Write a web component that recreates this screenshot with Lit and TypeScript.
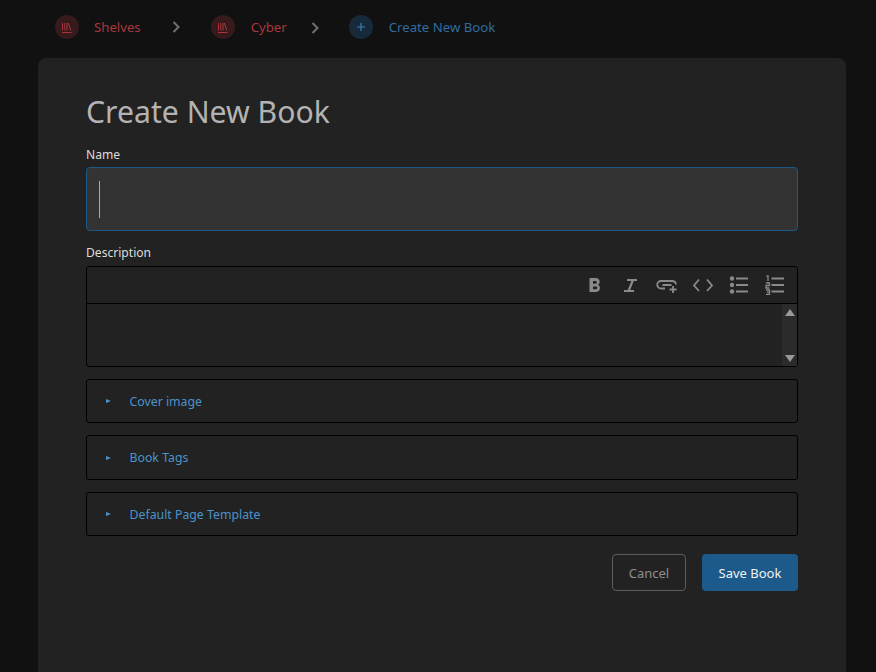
import { html, css, LitElement, svg } from "lit";
import { customElement } from "lit/decorators.js";

const shelfIcon = svg`<path d="M2.500 3v7.500M4.800 3v7.500M7 3v7.500M8.300 3l2.500 7.500M2 12.500h9.500" fill="none" stroke="currentColor" stroke-width="1"/>`;

const sections = ["Cover image", "Book Tags", "Default Page Template"];

@customElement("app-root")
export class AppRoot extends LitElement {
  static styles = css`
    :host {
      display: block;
      height: 672px;
      overflow: hidden;
      background: #111;
      font-family: "Noto Sans", "Open Sans", sans-serif;
      font-size: 13px;
      color: #ccc;
    }
    .crumbs {
      display: flex;
      align-items: center;
      height: 58px;
      padding: 0 0 4px 55px;
      box-sizing: border-box;
    }
    .crumb {
      display: flex;
      align-items: center;
      gap: 16px;
      font-size: 13.2px;
    }
    .crumb.start {
      gap: 15px;
    }
    .crumb.red {
      color: #a8373c;
    }
    .crumb.blue {
      color: #2f6d9f;
    }
    .dot {
      width: 24px;
      height: 24px;
      border-radius: 50%;
      display: flex;
      align-items: center;
      justify-content: center;
    }
    .red .dot {
      background: #361a1c;
    }
    .blue .dot {
      background: #172a3b;
    }
    .sep {
      flex: none;
      display: flex;
      justify-content: center;
      color: #707070;
    }
    .sep.first {
      width: 70px;
      margin-top: -1px;
    }
    .sep.second {
      width: 56px;
      padding-right: 6px;
      margin-top: 2px;
    }
    .card {
      margin: 0 30px 0 38px;
      background: #222;
      border-radius: 8px 8px 0 0;
      padding: 32px 48px 0;
      height: 614px;
      box-sizing: border-box;
    }
    h1 {
      margin: 0 0 12px;
      font-size: 30.2px;
      line-height: 44px;
      font-weight: 400;
      color: #b3b3b3;
    }
    label {
      display: block;
      font-size: 12.1px;
      line-height: 17px;
      color: #ddd;
      margin-bottom: 4px;
    }
    .desc-label {
      margin-bottom: 5px;
    }
    .name {
      height: 64px;
      box-sizing: border-box;
      background: #333;
      border: 1px solid #1c5a86;
      border-radius: 4px;
      padding: 13px 12px;
      margin-bottom: 13px;
    }
    .caret {
      width: 1px;
      height: 37px;
      background: #aaa;
    }
    .editor {
      height: 101px;
      box-sizing: border-box;
      border: 1px solid #000;
      border-radius: 3px;
      margin-bottom: 12px;
      display: flex;
      flex-direction: column;
    }
    .toolbar {
      height: 36px;
      flex: none;
      border-bottom: 1px solid #000;
      display: flex;
      align-items: center;
      justify-content: flex-end;
      gap: 14px;
      padding-right: 11px;
      color: #8a8a8a;
    }
    .toolbar svg {
      display: block;
      width: 22px;
      height: 20px;
    }
    .area {
      flex: 1;
      display: flex;
      justify-content: flex-end;
    }
    .scroll {
      width: 15px;
      background: #2b2b2b;
      display: flex;
      flex-direction: column;
      justify-content: space-between;
      align-items: center;
      padding: 5px 0 4px;
      box-sizing: border-box;
    }
    .up,
    .down {
      width: 0;
      height: 0;
      border-left: 5px solid transparent;
      border-right: 5px solid transparent;
    }
    .up {
      border-bottom: 7px solid #999;
    }
    .down {
      border-top: 7px solid #999;
    }
    .section {
      height: 44px;
      box-sizing: border-box;
      border: 1px solid #000;
      border-radius: 3px;
      margin-bottom: 12px;
      display: flex;
      align-items: center;
      padding-left: 19px;
      color: #4a93cb;
      font-size: 12.3px;
    }
    .section.tall {
      height: 45px;
    }
    .tri {
      width: 0;
      height: 0;
      border-left: 5px solid #4a93cb;
      border-top: 2.5px solid transparent;
      border-bottom: 2.5px solid transparent;
      margin-right: 18.5px;
    }
    .actions {
      display: flex;
      justify-content: flex-end;
      gap: 16px;
      margin-top: 18px;
    }
    .btn {
      height: 37px;
      box-sizing: border-box;
      border-radius: 4px;
      display: flex;
      align-items: center;
      justify-content: center;
      font-size: 13px;
    }
    .cancel {
      width: 74px;
      border: 1px solid #5c5c5c;
      color: #8f8f8f;
    }
    .save {
      width: 96px;
      background: #1b5a8a;
      color: #f2f2f2;
    }
  `;

  private toolbarIcons() {
    return html`
      <svg viewBox="0 0 22 20"><path d="M5.500 3h6.500a3.700 3.700 0 0 1 2.200 6.700 4 4 0 0 1-1.700 7.300H5.500zM9 6v2.700h2.500a1.350 1.350 0 0 0 0-2.700zM9 11.500v2.700h3a1.350 1.350 0 0 0 0-2.700z" fill="currentColor" fill-rule="evenodd"/></svg>
      <svg viewBox="0 0 22 20"><path d="M7 5h10M4 16h10M13 5 8.500 16" fill="none" stroke="currentColor" stroke-width="2.200"/></svg>
      <svg viewBox="0 0 22 20"><path d="M9 13.500H5a3.750 3.750 0 0 1 0-7.500h11a4 4 0 0 1 4 3.500M6.500 10h9M17 11v7M13.500 14.500h7" fill="none" stroke="currentColor" stroke-width="1.800"/></svg>
      <svg viewBox="0 0 22 20"><path d="M7 4.500 2 10.500 7 16M15 4.500l5 6-5 5.500" fill="none" stroke="currentColor" stroke-width="1.800"/></svg>
      <svg viewBox="0 0 22 20" fill="currentColor"><circle cx="4" cy="3.500" r="2.200"/><circle cx="4" cy="10" r="2.200"/><circle cx="4" cy="16.500" r="2.200"/><path d="M8 3.500h12M8 10h12M8 16.500h12" fill="none" stroke="currentColor" stroke-width="1.800"/></svg>
      <svg viewBox="0 0 22 20"><path d="M2.500 1h1.500v5M2 8h3.500v2.500H2V13h3.500M2 15h3.500v4.500H2M3 17.200h2.500" fill="none" stroke="currentColor" stroke-width="1.300"/><path d="M7.500 3.500H20M7.500 10H20M7.500 16.500H20" fill="none" stroke="currentColor" stroke-width="1.800"/></svg>
    `;
  }

  private chevron() {
    return html`<svg width="10" height="14" viewBox="0 0 10 14"><path d="M2.500 2 7.500 7 2.500 12" fill="none" stroke="currentColor" stroke-width="2"/></svg>`;
  }

  override render() {
    return html`
      <nav class="crumbs">
        <div class="crumb red start">
          <span class="dot"><svg width="14" height="14" viewBox="0 0 14 14">${shelfIcon}</svg></span>
          Shelves
        </div>
        <span class="sep first">${this.chevron()}</span>
        <div class="crumb red">
          <span class="dot"><svg width="14" height="14" viewBox="0 0 14 14">${shelfIcon}</svg></span>
          Cyber
        </div>
        <span class="sep second">${this.chevron()}</span>
        <div class="crumb blue">
          <span class="dot"><svg width="10" height="10" viewBox="0 0 10 10"><path d="M5 1v8M1 5h8" fill="none" stroke="#3a7fb5" stroke-width="1.200"/></svg></span>
          Create New Book
        </div>
      </nav>
      <main class="card">
        <h1>Create New Book</h1>
        <label>Name</label>
        <div class="name"><div class="caret"></div></div>
        <label class="desc-label">Description</label>
        <div class="editor">
          <div class="toolbar">${this.toolbarIcons()}</div>
          <div class="area">
            <div class="scroll"><span class="up"></span><span class="down"></span></div>
          </div>
        </div>
        ${sections.map(
          (s, i) => html`<div class="section ${i === 1 ? "tall" : ""}"><span class="tri"></span>${s}</div>`
        )}
        <div class="actions">
          <div class="btn cancel">Cancel</div>
          <div class="btn save">Save Book</div>
        </div>
      </main>
    `;
  }
}
